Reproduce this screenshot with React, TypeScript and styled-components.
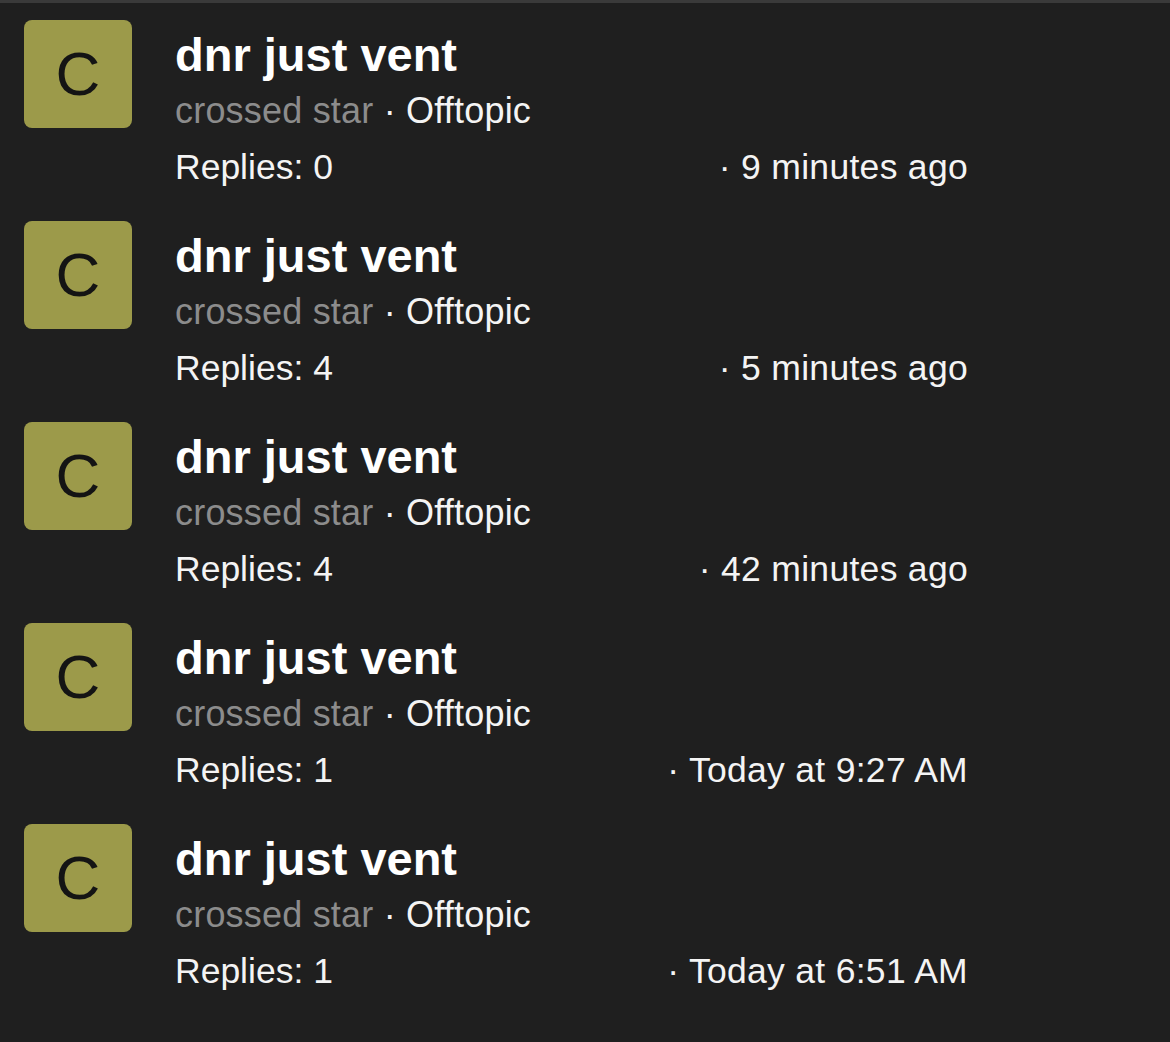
import React from 'react';
import styled, { createGlobalStyle } from 'styled-components';

const GlobalStyle = createGlobalStyle`
  html, body {
    margin: 0;
    padding: 0;
    background: #1f1f1f;
  }
  body {
    font-family: "Liberation Sans", Arial, Helvetica, sans-serif;
    color: #f4f4f4;
  }
`;

const List = styled.div`
  border-top: 3px solid #3a3a3a;
  min-height: 1039px;
  background: #1f1f1f;
`;

const Row = styled.div`
  display: flex;
  align-items: flex-start;
  gap: 43px;
  height: 201px;
  box-sizing: border-box;
  padding: 17px 0 0 24px;
`;

const Avatar = styled.div<{ color: string }>`
  flex: none;
  width: 108px;
  height: 108px;
  border-radius: 8px;
  background: ${(props) => props.color};
  color: #141414;
  display: flex;
  align-items: center;
  justify-content: center;
  font-size: 62px;
  line-height: 1;
`;

const Body = styled.div`
  width: 793px;
  margin-top: 10px;
`;

const Title = styled.div`
  font-size: 47px;
  line-height: 50px;
  font-weight: 700;
  color: #ffffff;
`;

const Sub = styled.div`
  margin-top: 8px;
  font-size: 36px;
  line-height: 46px;
  letter-spacing: 0.2px;
  color: #f4f4f4;
`;

const Author = styled.span`
  color: #8c8c8c;
`;

const Meta = styled.div`
  display: flex;
  justify-content: space-between;
  margin-top: 10px;
  font-size: 35.5px;
  line-height: 46px;
  color: #f4f4f4;
`;

const Time = styled.span`
  letter-spacing: 0.3px;
`;

type Thread = {
  title: string;
  author: string;
  forum: string;
  replies: number;
  time: string;
};

const threads: Thread[] = [
  { title: 'dnr just vent', author: 'crossed star', forum: 'Offtopic', replies: 0, time: '9 minutes ago' },
  { title: 'dnr just vent', author: 'crossed star', forum: 'Offtopic', replies: 4, time: '5 minutes ago' },
  { title: 'dnr just vent', author: 'crossed star', forum: 'Offtopic', replies: 4, time: '42 minutes ago' },
  { title: 'dnr just vent', author: 'crossed star', forum: 'Offtopic', replies: 1, time: 'Today at 9:27 AM' },
  { title: 'dnr just vent', author: 'crossed star', forum: 'Offtopic', replies: 1, time: 'Today at 6:51 AM' },
];

const App = () => {
  return (
    <>
      <GlobalStyle />
      <List>
        {threads.map((t, i) => (
          <Row key={i}>
            <Avatar color="#9c9a4a">{t.author.charAt(0).toUpperCase()}</Avatar>
            <Body>
              <Title>{t.title}</Title>
              <Sub>
                <Author>{t.author}</Author> · {t.forum}
              </Sub>
              <Meta>
                <span>Replies: {t.replies}</span>
                <Time>· {t.time}</Time>
              </Meta>
            </Body>
          </Row>
        ))}
      </List>
    </>
  );
};

export default App;
